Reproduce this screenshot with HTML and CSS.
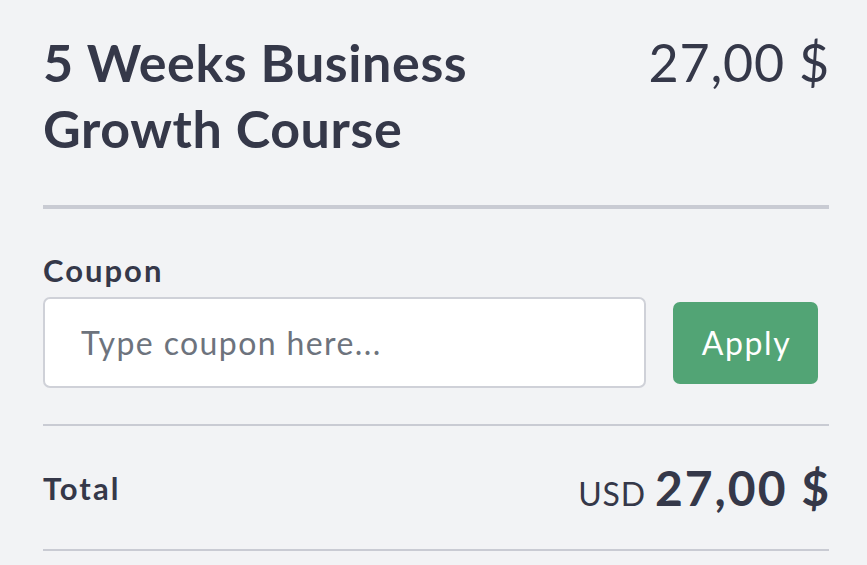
FILE: index.html
```html
<!DOCTYPE html>
<html lang="en">
<head>
<meta charset="utf-8">
<title>Checkout summary</title>
<link rel="stylesheet" href="styles.css">
</head>
<body>
<div class="summary">
  <div class="product">
    <h1 class="product-title">5 Weeks Business Growth Course</h1>
    <div class="product-price">27,00 $</div>
  </div>
  <hr class="divider divider-thick">
  <div class="coupon">
    <label class="coupon-label" for="coupon">Coupon</label>
    <div class="coupon-row">
      <input id="coupon" class="coupon-input" type="text" placeholder="Type coupon here...">
      <button class="coupon-apply" type="button">Apply</button>
    </div>
  </div>
  <hr class="divider">
  <div class="total">
    <span class="total-label">Total</span>
    <span class="total-amount"><span class="total-currency">USD</span><span class="total-value">27,00 $</span></span>
  </div>
  <hr class="divider">
</div>
</body>
</html>
```

FILE: styles.css
```css
html, body {
  margin: 0;
  padding: 0;
  background: #f2f3f5;
}
body {
  font-family: "Lato", "Liberation Sans", sans-serif;
  color: #353849;
}
.summary {
  padding: 29px 38px 0 43px;
}
.product {
  display: flex;
  justify-content: space-between;
  align-items: flex-start;
  gap: 24px;
}
.product-title {
  margin: 0;
  max-width: 480px;
  font-size: 52px;
  line-height: 66px;
  font-weight: 700;
  letter-spacing: 0.6px;
}
.product-price {
  font-size: 52px;
  line-height: 66px;
  font-weight: 400;
  white-space: nowrap;
  letter-spacing: 0.8px;
  margin-right: -1px;
}
.divider {
  border: 0;
  margin: 0;
  height: 2px;
  background: #c9cbd3;
}
.divider-thick {
  height: 4px;
  margin-top: 44px;
}
.coupon {
  padding-top: 44px;
  padding-bottom: 36px;
}
.coupon-label {
  display: block;
  font-size: 31px;
  line-height: 35px;
  font-weight: 700;
  letter-spacing: 2px;
  margin-bottom: 9px;
}
.coupon-row {
  display: flex;
  align-items: center;
  gap: 27px;
  padding-right: 11px;
}
.coupon-input {
  flex: 1;
  box-sizing: border-box;
  height: 91px;
  padding: 0 36px;
  border: 2px solid #cfd1d8;
  border-radius: 7px;
  background: #ffffff;
  font-family: inherit;
  font-size: 32px;
  letter-spacing: 1.4px;
  color: #353849;
  outline: none;
}
.coupon-input::placeholder {
  color: #6d737d;
}
.coupon-apply {
  width: 145px;
  height: 82px;
  border: 0;
  border-radius: 7px;
  background: #52a475;
  color: #ffffff;
  font-family: inherit;
  font-size: 32px;
  font-weight: 400;
  letter-spacing: 1.6px;
  padding: 0 0 0 2px;
}
.total {
  display: flex;
  justify-content: space-between;
  align-items: center;
  height: 123px;
}
.total-label {
  font-size: 31px;
  font-weight: 700;
  letter-spacing: 2px;
}
.total-amount {
  display: flex;
  align-items: baseline;
  gap: 9px;
  white-space: nowrap;
  margin-right: -2px;
}
.total-currency {
  font-size: 32px;
  font-weight: 400;
  letter-spacing: 0.8px;
}
.total-value {
  font-size: 48px;
  font-weight: 700;
  letter-spacing: 2px;
}
```
